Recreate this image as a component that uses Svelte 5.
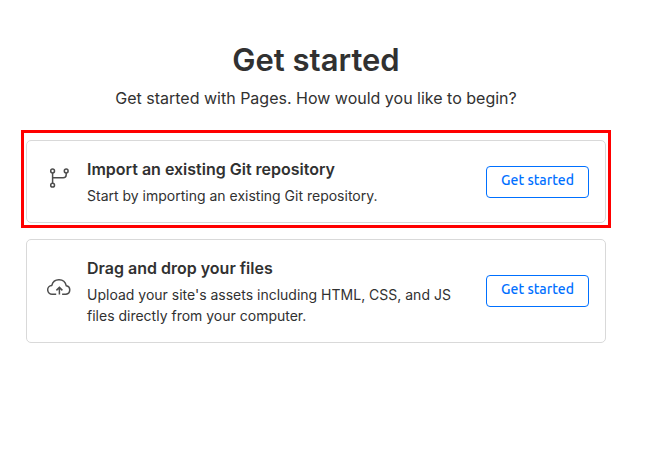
<script>
	const options = [
		{
			id: 'git',
			title: 'Import an existing Git repository',
			description: 'Start by importing an existing Git repository.',
			icon: 'branch',
			highlighted: true
		},
		{
			id: 'upload',
			title: 'Drag and drop your files',
			description: "Upload your site's assets including HTML, CSS, and JS files directly from your computer.",
			icon: 'cloud',
			highlighted: false
		}
	];
</script>

<main class="page">
	<header class="intro">
		<h1>Get started</h1>
		<p>Get started with Pages. How would you like to begin?</p>
	</header>

	<div class="options">
		{#each options as option (option.id)}
			<section class="card" class:highlighted={option.highlighted}>
				<svg class="icon" viewBox="0 0 24 24" aria-hidden="true">
					{#if option.icon === 'branch'}
						<circle cx="5.6" cy="5" r="1.9" />
						<circle cx="19.2" cy="5" r="1.9" />
						<circle cx="5.6" cy="19.2" r="1.9" />
						<path d="M5.6 6.9v10.4M19.2 6.9v1.8q0 3-3 3H5.6" />
					{:else}
						<path d="M9.2 19.2H5.4a4.4 4.4 0 0 1-.6-8.8 7.4 7.4 0 0 1 14.4 0.3 4.3 4.3 0 0 1-.2 8.5h-3.9" />
						<path d="M12.4 19.6v-7M9.4 15.4l3-3 3 3" />
					{/if}
				</svg>
				<div class="text">
					<h2 id="{option.id}-title">{option.title}</h2>
					<p>{option.description}</p>
				</div>
				<button type="button" aria-describedby="{option.id}-title">Get started</button>
			</section>
		{/each}
	</div>
</main>

<style>
	:global(body) {
		margin: 0;
		background: #fff;
	}

	.page {
		padding: 40px 57px 40px 26px;
		color: #313131;
		font-family: Inter, sans-serif;
	}

	.intro {
		margin-bottom: 30px;
		text-align: center;
	}

	h1 {
		margin: 0 0 6px;
		font-size: 31px;
		font-weight: 600;
		line-height: 40px;
	}

	.intro p {
		margin: 0;
		font-size: 16px;
		line-height: 24px;
	}

	.options {
		display: flex;
		flex-direction: column;
		gap: 16px;
	}

	.card {
		position: relative;
		display: flex;
		align-items: center;
		gap: 16px;
		padding: 16px 16px 16px 20px;
		border: 1px solid #d9d9d9;
		border-radius: 5px;
	}

	/* red frame drawn around the recommended option */
	.highlighted::after {
		content: '';
		position: absolute;
		inset: -11px -6px -6px;
		border: 3px solid #f00;
		pointer-events: none;
	}

	.icon {
		flex: none;
		width: 24px;
		height: 24px;
		padding-bottom: 8px;
		fill: none;
		stroke: #4d4d4d;
		stroke-width: 1.5;
	}

	.text {
		flex: 1;
		min-width: 0;
	}

	h2 {
		margin: 0 0 4px;
		font-size: 16px;
		font-weight: 600;
		line-height: 24px;
	}

	.text p {
		margin: 0;
		font-size: 14px;
		line-height: 21px;
	}

	button {
		flex: none;
		padding: 4px 14px 7px;
		border: 1px solid #0070ff;
		border-radius: 4px;
		background: #fff;
		color: #0070ff;
		font-family: Ubuntu, 'Noto Sans', sans-serif;
		font-size: 14px;
		font-weight: 500;
		line-height: 19px;
		cursor: pointer;
	}

	button:hover {
		background: #eef5ff;
	}
</style>
